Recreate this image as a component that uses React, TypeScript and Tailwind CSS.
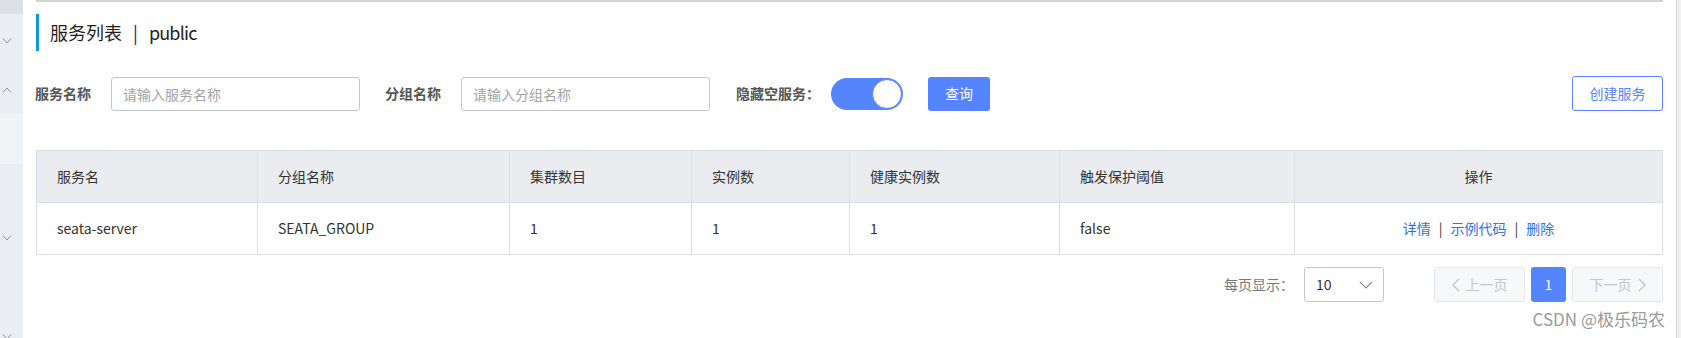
import React from 'react';

const font = { fontFamily: '"Noto Sans CJK SC", "Noto Sans", sans-serif' };

function Chevron({ up = false }: { up?: boolean }) {
  return (
    <svg width="10" height="6" viewBox="0 0 10 6" className="block">
      <polyline
        points={up ? '1,5.5 5,1 9,5.5' : '1,0.5 5,5 9,0.5'}
        fill="none"
        stroke="#8c939d"
        strokeWidth="1"
      />
    </svg>
  );
}

const columns = [
  { title: '服务名', w: 'w-[221px]' },
  { title: '分组名称', w: 'w-[252px]' },
  { title: '集群数目', w: 'w-[182px]' },
  { title: '实例数', w: 'w-[158px]' },
  { title: '健康实例数', w: 'w-[210px]' },
  { title: '触发保护阈值', w: 'w-[235px]' },
];

const rows = [
  { name: 'seata-server', group: 'SEATA_GROUP', clusters: 1, instances: 1, healthy: 1, threshold: 'false' },
];

export default function App() {
  return (
    <div className="relative flex w-[1681px] h-[338px] bg-white overflow-hidden text-[#333]" style={font}>
      {/* collapsed side menu */}
      <aside className="w-[23px] h-full bg-[#eaedf1] flex flex-col">
        <div className="h-[14px] bg-[#dde0e6]" />
        <div className="h-[48px] flex items-center pl-[2px] pt-[6px]"><Chevron /></div>
        <div className="h-[52px] flex items-center pl-[2px] pt-[4px]"><Chevron up /></div>
        <div className="h-[50px] bg-[#f2f3f6]" />
        <div className="h-[69px]" />
        <div className="h-[10px] flex items-center pl-[2px]"><Chevron /></div>
        <div className="flex-1" />
        <div className="h-[4px] flex items-start pl-[2px] overflow-hidden"><Chevron /></div>
      </aside>

      {/* main panel */}
      <main className="flex-1 pl-[13px] pr-[13px] flex flex-col">
        <div className="h-[2px] bg-[#d4d4d6]" />

        <div className="mt-[12px] h-[37px] border-l-[3px] border-[#0c9bd6] pl-[11px] flex items-center text-[18px] text-[#1f1f1f]">
          <span>服务列表</span>
          <span className="mx-[11px]">|</span>
          <span className="tracking-[-0.8px]">public</span>
        </div>

        <div className="mt-[25px] h-[35px] flex items-center text-[14px]">
          <label className="font-bold text-[#555] w-[60px] -ml-[1px]">服务名称</label>
          <input
            placeholder="请输入服务名称"
            className="ml-[16px] w-[249px] h-[34px] border border-[#c4c6cf] rounded-[3px] px-[11px] text-[14px] placeholder:text-[#a3a3a3] outline-none"
          />
          <label className="ml-[25px] font-bold text-[#555] w-[60px]">分组名称</label>
          <input
            placeholder="请输入分组名称"
            className="ml-[16px] w-[249px] h-[34px] border border-[#c4c6cf] rounded-[3px] px-[11px] text-[14px] placeholder:text-[#a3a3a3] outline-none"
          />
          <label className="ml-[26px] font-bold text-[#555] w-[83px] whitespace-nowrap">隐藏空服务：</label>
          <div className="ml-[12px] w-[72px] h-[32px] rounded-full bg-[#5584ff] flex items-center justify-end pr-[1px]">
            <div className="w-[30px] h-[30px] rounded-full bg-white border border-[#5584ff]" />
          </div>
          <button className="ml-[25px] w-[62px] h-[34px] rounded-[3px] bg-[#5584ff] text-white text-[14px]">查询</button>
          <div className="flex-1" />
          <button className="w-[91px] h-[35px] rounded-[3px] border border-[#5584ff] text-[#5584ff] text-[14px] bg-white">
            创建服务
          </button>
        </div>

        <table className="mt-[39px] w-[1627px] border-collapse text-[14px] table-fixed">
          <thead>
            <tr className="bg-[#ebecf0] h-[52px]">
              {columns.map((c) => (
                <th key={c.title} className={`${c.w} border border-[#dcdee3] text-left font-normal pl-[20px]`}>
                  {c.title}
                </th>
              ))}
              <th className="border border-[#dcdee3] font-normal text-center">操作</th>
            </tr>
          </thead>
          <tbody>
            {rows.map((r) => (
              <tr key={r.name} className="h-[52px]">
                <td className="border border-[#dcdee3] pl-[20px]">{r.name}</td>
                <td className="border border-[#dcdee3] pl-[20px]">{r.group}</td>
                <td className="border border-[#dcdee3] pl-[20px]">{r.clusters}</td>
                <td className="border border-[#dcdee3] pl-[20px]">{r.instances}</td>
                <td className="border border-[#dcdee3] pl-[20px]">{r.healthy}</td>
                <td className="border border-[#dcdee3] pl-[20px]">{r.threshold}</td>
                <td className="border border-[#dcdee3] text-center">
                  <a className="text-[#2f72e0] cursor-pointer">详情</a>
                  <span className="mx-[8px] text-[#333]">|</span>
                  <a className="text-[#2f72e0] cursor-pointer">示例代码</a>
                  <span className="mx-[8px] text-[#333]">|</span>
                  <a className="text-[#2f72e0] cursor-pointer">删除</a>
                </td>
              </tr>
            ))}
          </tbody>
        </table>

        <div className="mt-[12px] flex items-center justify-end text-[14px]">
          <span className="text-[#777]">每页显示：</span>
          <div className="ml-[10px] w-[80px] h-[35px] border border-[#c4c6cf] rounded-[3px] flex items-center justify-between pl-[11px] pr-[10px] text-[#333]">
            <span>10</span>
            <svg width="14" height="8" viewBox="0 0 14 8">
              <polyline points="1,1 7,7 13,1" fill="none" stroke="#8a8d96" strokeWidth="1.2" />
            </svg>
          </div>
          <button className="ml-[50px] w-[91px] h-[35px] rounded-[3px] border border-[#e6e7eb] bg-[#f7f8fa] text-[#c4c6cc] flex items-center justify-center gap-[6px]">
            <svg width="8" height="14" viewBox="0 0 8 14">
              <polyline points="7,1 1,7 7,13" fill="none" stroke="#c4c6cc" strokeWidth="1.4" />
            </svg>
            <span>上一页</span>
          </button>
          <button className="ml-[6px] w-[35px] h-[35px] rounded-[3px] bg-[#5584ff] text-white">1</button>
          <button className="ml-[6px] w-[91px] h-[35px] rounded-[3px] border border-[#e6e7eb] bg-[#f7f8fa] text-[#c4c6cc] flex items-center justify-center gap-[6px]">
            <span>下一页</span>
            <svg width="8" height="14" viewBox="0 0 8 14">
              <polyline points="1,1 7,7 1,13" fill="none" stroke="#c4c6cc" strokeWidth="1.4" />
            </svg>
          </button>
        </div>
      </main>

      {/* scrollbar edge */}
      <div className="w-[5px] h-full bg-[#f1f1f1] border-l border-[#d6d6d6]" />

      {/* watermark */}
      <div className="absolute right-[16px] top-[307px] text-[17px] text-[#9a9a9a] leading-[24px]">CSDN @极乐码农</div>
    </div>
  );
}
